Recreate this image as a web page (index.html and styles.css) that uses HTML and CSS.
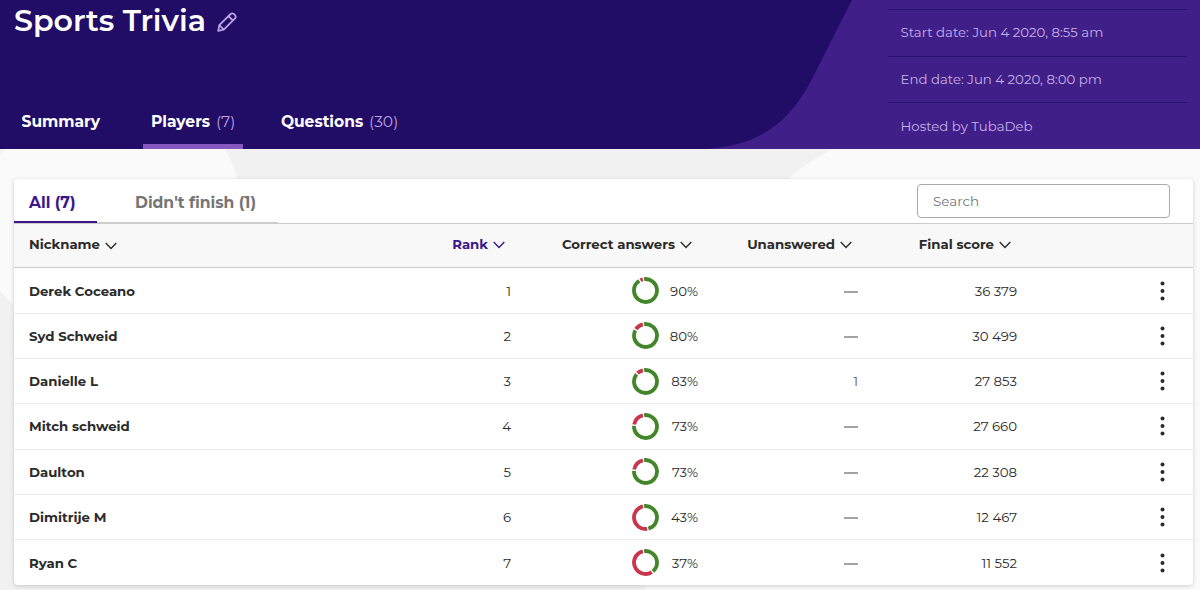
FILE: index.html
```html
<!DOCTYPE html>
<html lang="en">
<head>
<meta charset="utf-8">
<title>Sports Trivia</title>
<link rel="stylesheet" href="styles.css">
</head>
<body>
<header class="hero">
  <svg class="hero-shape" width="1200" height="149" viewBox="0 0 1200 149"><path d="M852 0 L812 79 C786 129 754 145 706 149 H1200 V0Z" fill="#401f88"/></svg>
  <div class="hero-main">
    <h1 class="title"><span>Sports Trivia</span>
      <svg class="pencil" width="20" height="20" viewBox="0 0 20 20" fill="none" stroke="#bba2e4" stroke-width="1.8" stroke-linejoin="round"><path d="M1.2 18.8 L2.3 13.2 L13.6 2 Q15 .8 16.5 1.7 L18.3 3.4 Q19.2 4.9 18 6.4 L6.8 17.6 Z M11.5 4.2 L15.8 8.5 M2.3 13.2 L6.8 17.6"/></svg>
    </h1>
    <nav class="tabs">
      <a class="tab">Summary</a>
      <a class="tab active">Players <span class="count">(7)</span></a>
      <a class="tab">Questions <span class="count">(30)</span></a>
    </nav>
  </div>
  <div class="meta">
    <div class="meta-row">Start date: Jun 4 2020, 8:55 am</div>
    <div class="meta-row">End date: Jun 4 2020, 8:00 pm</div>
    <div class="meta-row host">Hosted by TubaDeb</div>
  </div>
</header>
<main class="page">
  <svg class="backdrop" width="1200" height="441" viewBox="0 0 1200 441"><path d="M5 0 L0 6 V142 L14 157 H200 L237 30 Q233 14 225 0Z M832 0 Q808 13 786 31 L645 300 V441 H1200 V0Z" fill="#fafafa"/></svg>
  <section class="card">
    <div class="filters">
      <a class="filter selected">All (7)</a>
      <a class="filter unfinished">Didn't finish (1)</a>
      <input class="search" placeholder="Search">
    </div>
    <div class="row head">
      <span>Nickname<svg class="chev" viewBox="0 0 12 8"><path d="M.7 1 6 6.5 11.3 1"/></svg></span>
      <span class="num rank">Rank<svg class="chev" viewBox="0 0 12 8"><path d="M.7 1 6 6.5 11.3 1"/></svg></span>
      <span class="num">Correct answers<svg class="chev" viewBox="0 0 12 8"><path d="M.7 1 6 6.5 11.3 1"/></svg></span>
      <span class="num">Unanswered<svg class="chev" viewBox="0 0 12 8"><path d="M.7 1 6 6.5 11.3 1"/></svg></span>
      <span class="num">Final score<svg class="chev" viewBox="0 0 12 8"><path d="M.7 1 6 6.5 11.3 1"/></svg></span>
    </div>
    <div class="rows" id="rows"></div>
  </section>
</main>
<script src="players.js"></script>
</body>
</html>
```
FILE: styles.css
```css
* { box-sizing: border-box; }
body { margin: 0; height: 590px; overflow: hidden; font-family: Montserrat, Inter, sans-serif; font-size: 13.3px; color: #2b2b2b; background: #f1f1f1; }
.hero { position: relative; height: 149px; display: flex; justify-content: space-between; background: #210d66; color: #fff; }
.hero-shape { position: absolute; inset: 0; }
.hero-main { position: relative; display: flex; flex-direction: column; justify-content: space-between; padding-left: 14px; }
.title { display: flex; align-items: center; gap: 11px; margin: 1px 0 0; font-size: 30.1px; line-height: 40px; font-weight: 600; }
.pencil { margin-top: 2px; }
.tabs { display: flex; gap: 30px; font-size: 15.5px; font-weight: 700; }
.tab { height: 56px; padding: 17px 7.5px 0; line-height: 24px; white-space: nowrap; }
.tab:first-child { width: 99.4px; }
.tab.active { width: 100px; border-bottom: 5px solid #8557bf; }
.count { font-weight: 400; color: #bba2e4; margin-left: 1.5px; }
.meta { position: relative; width: 299px; margin-right: 13px; padding-top: 9px; color: #c7afe8; }
.meta-row { height: 46.7px; line-height: 45px; padding-left: 12.5px; border-top: 1px solid #2a1070; }
.meta-row.host { line-height: 46px; }
.page { position: relative; height: 441px; padding: 30px 7px 0 14px; }
.backdrop { position: absolute; top: 0; left: 0; }
.card { position: relative; width: 1179px; height: 406px; background: #fff; border-radius: 4px; box-shadow: 0 1px 4px rgba(0,0,0,.18); }
.filters { display: flex; height: 44px; font-size: 15.6px; font-weight: 700; color: #757575; padding-right: 23px; }
.filter { height: 44px; line-height: 47px; padding-left: 15px; }
.filter.selected { width: 83px; color: #3b178a; border-bottom: 2px solid #3b178a; }
.filter.unfinished { width: 181px; padding-left: 38px; border-bottom: 1px solid #ccc; }
.search { width: 253px; height: 34px; margin: 5px 0 0 auto; padding: 0 15px; border: 1px solid #aaa; border-radius: 4px; background: #fff; font: 13.5px Montserrat, Inter, sans-serif; }
.search::placeholder { color: #757575; }
.row { display: grid; grid-template-columns: 310px 187px 187px 160px 159px 147.5px; align-items: center; height: 45.3px; border-bottom: 1px solid #ebebeb; }
.row:last-child { border-bottom: 0; }
.rows { padding-top: .4px; }
.row > :first-child { padding-left: 15px; font-weight: 700; }
.head { height: 45px; background: #f8f8f8; border: solid #ccc; border-width: 1px 0; font-weight: 700; padding-bottom: 3px; }
.head .num { padding-right: 6px; }
.head .rank { color: #3b178a; }
.num { display: flex; align-items: center; justify-content: flex-end; white-space: nowrap; }
.chev { width: 12px; height: 8px; margin-left: 5px; position: relative; top: 1px; fill: none; stroke: currentColor; stroke-width: 1.4; }
.percent { width: 29px; text-align: right; }
.donut { width: 27px; height: 27px; margin-right: 10px; fill: none; stroke-width: 3.8; }
.correct-arc { stroke: #43852b; }
.wrong-arc { stroke: #c9364b; }
.missed { color: #555; }
.missed i { display: block; width: 14px; height: 2px; background: #a3a3a3; margin-top: 2px; }
.dots { width: 5px; height: 20px; justify-self: end; fill: #2b2b2b; }
```
FILE: players.js
```javascript
// name, percentage, angle at which the green arc ends, unanswered, score
const players = [
  ["Derek Coceano", 90, 327, 0, "36 379"],
  ["Syd Schweid", 80, 297, 0, "30 499"],
  ["Danielle L", 83, 309, 1, "27 853"],
  ["Mitch schweid", 73, 273, 0, "27 660"],
  ["Daulton", 73, 273, 0, "22 308"],
  ["Dimitrije M", 43, 165, 0, "12 467"],
  ["Ryan C", 37, 140, 0, "11 552"]
];
const arc = (cls, from, to) => `<circle class="${cls}" cx="13.5" cy="13.5" r="11.5" pathLength="360" stroke-dasharray="${to - from} 360" transform="rotate(${from - 90} 13.5 13.5)"/>`;
document.getElementById("rows").innerHTML = players.map(([name, pct, end, missed, score], i) => `
  <div class="row">
    <span>${name}</span>
    <span class="num">${i + 1}</span>
    <span class="num"><svg class="donut" viewBox="0 0 27 27">${arc("correct-arc", -7, end)}${arc("wrong-arc", end + 7, 347)}</svg><span class="percent">${pct}%</span></span>
    <span class="num missed">${missed || "<i></i>"}</span>
    <span class="num">${score}</span>
    <svg class="dots" viewBox="0 0 5 20"><circle cx="2.5" cy="2.5" r="2"/><circle cx="2.5" cy="10" r="2"/><circle cx="2.5" cy="17.5" r="2"/></svg>
  </div>`).join("");
```
